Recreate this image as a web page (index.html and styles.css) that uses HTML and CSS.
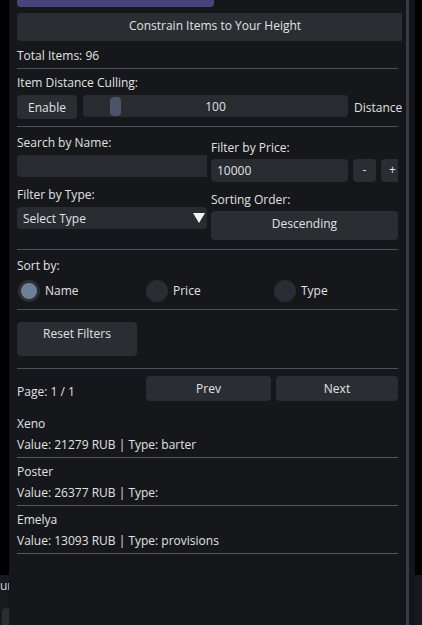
FILE: index.html
```html
<!DOCTYPE html>
<html>
<head>
<meta charset="utf-8">
<link rel="stylesheet" href="styles.css">
</head>
<body>
<div class="desk">
  <div class="backwin">
    <div class="bw-text">ur</div>
    <div class="bw-btn"></div>
  </div>
  <div class="win">
    <div class="content">
      <div class="btn-purple"></div>
      <div class="btn wide">Constrain Items to Your Height</div>
      <div class="text lbl t-total">Total Items: 96</div>
      <div class="sep"></div>
      <div class="text lbl t-cull">Item Distance Culling:</div>
      <div class="cull-row">
        <div class="btn enable">Enable</div>
        <div class="slider"><div class="grab"></div><span class="slider-val">100</span></div>
        <div class="text dist">Distance</div>
      </div>
      <div class="sep s2"></div>
      <div class="filters">
        <div class="col left">
          <div class="text lbl">Search by Name:</div>
          <div class="input name-in"></div>
          <div class="text lbl t-type">Filter by Type:</div>
          <div class="input select"><span>Select Type</span><span class="tri"></span></div>
        </div>
        <div class="col right">
          <div class="text lbl t-price">Filter by Price:</div>
          <div class="price-row">
            <div class="input price-in">10000</div>
            <div class="btn small">-</div>
            <div class="btn small">+</div>
          </div>
          <div class="text lbl t-order">Sorting Order:</div>
          <div class="btn order">Descending</div>
        </div>
      </div>
      <div class="sep s3"></div>
      <div class="text lbl t-sort">Sort by:</div>
      <div class="radios">
        <div class="radio on"><span class="dot"></span><span class="rl">Name</span></div>
        <div class="radio"><span class="dot"></span><span class="rl">Price</span></div>
        <div class="radio"><span class="dot"></span><span class="rl">Type</span></div>
      </div>
      <div class="sep s4"></div>
      <div class="btn reset">Reset Filters</div>
      <div class="sep s5"></div>
      <div class="page-row">
        <div class="text page">Page: 1 / 1</div>
        <div class="btn nav prev">Prev</div>
        <div class="btn nav next">Next</div>
      </div>
      <div class="items">
        <div class="item">
          <div class="text">Xeno</div>
          <div class="text">Value: 21279 RUB | Type: barter</div>
        </div>
        <div class="item">
          <div class="text">Poster</div>
          <div class="text">Value: 26377 RUB | Type:</div>
        </div>
        <div class="item">
          <div class="text">Emelya</div>
          <div class="text">Value: 13093 RUB | Type: provisions</div>
        </div>
      </div>
    </div>
    <div class="scroll"><div class="thumb"></div></div>
  </div>
</div>
</body>
</html>
```
FILE: styles.css
```css
* { box-sizing: border-box; }
html, body { margin: 0; padding: 0; }
body {
  background: #000;
  font-family: "Open Sans", "Noto Sans", sans-serif;
  font-size: 12px;
  color: #e2e2e2;
  width: 422px;
  height: 625px;
  overflow: hidden;
}
.desk { position: relative; width: 422px; height: 625px; }

.backwin {
  position: absolute;
  left: 0; top: 575px;
  width: 422px; height: 50px;
  background: #17191c;
}
.bw-text {
  position: absolute;
  left: 0; top: 3px;
  line-height: 16px;
  color: #d8d8d8;
}
.bw-btn {
  position: absolute;
  left: 2px; top: 33px;
  width: 30px; height: 22px;
  border-radius: 4px;
  background: #2a2d31;
}

.win {
  position: absolute;
  left: 9px; top: 0;
  width: 406px; height: 625px;
  background: #15171a;
  display: flex;
}
.content {
  width: 393px;
  height: 625px;
  overflow: hidden;
  padding-left: 8px;
  display: flex;
  flex-direction: column;
}
.scroll {
  width: 13px;
  display: flex;
  padding-left: 4px;
  padding-right: 3px;
  background: #131518;
}
.thumb { width: 3px; background: #393c45; }

.text { line-height: 16px; height: 16px; white-space: nowrap; flex-shrink: 0; }
.lbl { line-height: 14px; padding-top: 2px; }

.btn {
  background: #2a2d31;
  border-radius: 4px;
  text-align: center;
  white-space: nowrap;
  flex-shrink: 0;
}
.btn-purple {
  width: 197px; height: 7px;
  background: #47447b;
  border-radius: 0 0 4px 4px;
  flex-shrink: 0;
}
.wide {
  margin-top: 6px;
  width: 396px; height: 28px;
  line-height: 26px;
}
.t-total { margin-top: 6px; }
.sep {
  width: 381px; height: 1px;
  background: #4a505c;
  flex-shrink: 0;
  margin-top: 5px;
}
.t-cull { margin-top: 5px; }
.cull-row {
  margin-top: 5px;
  display: flex;
  align-items: flex-start;
  gap: 6px;
  height: 24px;
  flex-shrink: 0;
}
.enable { width: 60px; height: 24px; line-height: 25px; }
.slider {
  position: relative;
  width: 265px; height: 22px;
  background: #282b30;
  border-radius: 4px;
  text-align: center;
  line-height: 24px;
  flex-shrink: 0;
}
.grab {
  position: absolute;
  left: 27px; top: 2px;
  width: 11px; height: 19px;
  border-radius: 4px;
  background: #4b5469;
}
.slider-val { position: relative; }
.dist { line-height: 25px; height: 24px; }
.s2 { margin-top: 7px; }

.filters {
  display: flex;
  gap: 4px;
  width: 381px;
  flex-shrink: 0;
}
.col { display: flex; flex-direction: column; overflow: hidden; }
.col.left { width: 190px; margin-top: 7px; }
.col.right { width: 187px; margin-top: 12px; }
.input {
  background: #282b30;
  border-radius: 4px;
  flex-shrink: 0;
}
.name-in { margin-top: 5px; width: 200px; height: 22px; }
.t-type { margin-top: 9px; }
.select {
  margin-top: 5px;
  width: 190px; height: 22px;
  display: flex;
  justify-content: space-between;
  align-items: center;
  padding: 2px 2px 0 6px;
  line-height: 20px;
}
.tri {
  width: 0; height: 0;
  border-left: 6px solid transparent;
  border-right: 6px solid transparent;
  border-top: 10px solid #f2f2f2;
  margin-top: -3px;
}
.price-row { margin-top: 4px; display: flex; gap: 5px; height: 23px; flex-shrink: 0; }
.price-in { width: 137px; height: 23px; line-height: 24px; padding-left: 6px; }
.small { width: 23px; height: 23px; line-height: 22px; }
.t-order { margin-top: 9px; }
.order { margin-top: 4px; width: 187px; height: 29px; line-height: 26px; }
.s3 { margin-top: 9px; }

.t-sort { margin-top: 7px; }
.radios {
  margin-top: 6px;
  display: flex;
  height: 23px;
  margin-left: 1px;
  flex-shrink: 0;
}
.radio {
  width: 129.5px;
  display: flex;
  align-items: center;
  gap: 5px;
}
.dot {
  width: 22px; height: 22px;
  border-radius: 50%;
  background: #2a2d31;
  flex-shrink: 0;
}
.radio.on .dot {
  background: #6d8095;
  border: 3px solid #2b2f35;
}
.s4 { margin-top: 7px; }
.reset {
  margin-top: 12px;
  width: 120px; height: 34px;
  line-height: 16px;
  padding-top: 4px;
}
.s5 { margin-top: 12px; }
.page-row {
  margin-top: 7px;
  display: flex;
  gap: 5px;
  height: 25px;
  flex-shrink: 0;
}
.page { width: 124px; margin-top: 7px; line-height: 18px; height: 18px; }
.nav { height: 25px; line-height: 25px; }
.prev { width: 125px; }
.next { width: 122px; }

.items { margin-top: 15px; display: flex; flex-direction: column; flex-shrink: 0; }
.item {
  width: 381px;
  display: flex;
  flex-direction: column;
  gap: 5px;
  padding-bottom: 4px;
  border-bottom: 1px solid #55585e;
  margin-bottom: 6px;
}
```
